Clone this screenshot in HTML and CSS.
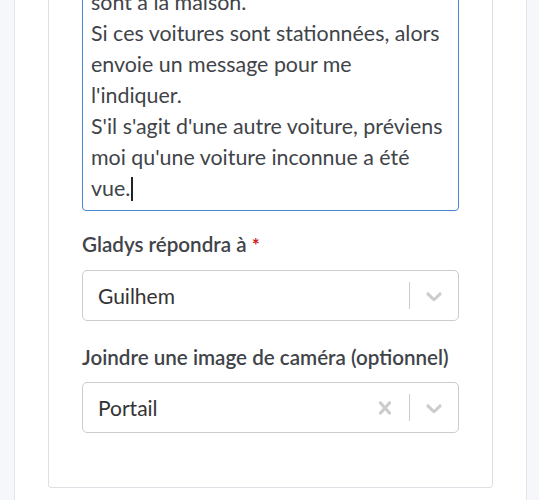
FILE: index.html
```html
<!DOCTYPE html>
<html lang="fr">
<head>
<meta charset="utf-8">
<title>Scène</title>
<link rel="stylesheet" href="styles.css">
</head>
<body>
<div class="card">
  <div class="panel">
    <div class="form-group form-group-message">
      <div class="textarea">sont à la maison.<br>Si ces voitures sont stationnées, alors<br>envoie un message pour me<br>l'indiquer.<br>S'il s'agit d'une autre voiture, préviens<br>moi qu'une voiture inconnue a été<br>vue.<span class="caret"></span></div>
    </div>
    <div class="form-group">
      <label class="form-label">Gladys répondra à <span class="required">*</span></label>
      <div class="select">
        <div class="select-value">Guilhem</div>
        <div class="select-indicators">
          <span class="separator"></span>
          <span class="indicator">
            <svg viewBox="0 0 20 20" class="icon"><path d="M4.516 7.548c0.436-0.446 1.043-0.481 1.576 0l3.908 3.747 3.908-3.747c0.533-0.481 1.141-0.446 1.574 0 0.436 0.445 0.408 1.197 0 1.615-0.406 0.418-4.695 4.502-4.695 4.502-0.217 0.223-0.502 0.335-0.787 0.335s-0.57-0.112-0.789-0.335c0 0-4.287-4.084-4.695-4.502s-0.436-1.17 0-1.615z"/></svg>
          </span>
        </div>
      </div>
    </div>
    <div class="form-group">
      <label class="form-label">Joindre une image de caméra (optionnel)</label>
      <div class="select">
        <div class="select-value">Portail</div>
        <div class="select-indicators">
          <span class="indicator">
            <svg viewBox="0 0 20 20" class="icon"><path d="M14.348 14.849c-0.469 0.469-1.229 0.469-1.697 0l-2.651-3.030-2.651 3.029c-0.469 0.469-1.229 0.469-1.697 0-0.469-0.469-0.469-1.229 0-1.697l2.758-3.15-2.759-3.152c-0.469-0.469-0.469-1.228 0-1.697s1.228-0.469 1.697 0l2.652 3.031 2.651-3.031c0.469-0.469 1.228-0.469 1.697 0s0.469 1.229 0 1.697l-2.758 3.152 2.758 3.150c0.469 0.469 0.469 1.229 0 1.698z"/></svg>
          </span>
          <span class="separator"></span>
          <span class="indicator">
            <svg viewBox="0 0 20 20" class="icon"><path d="M4.516 7.548c0.436-0.446 1.043-0.481 1.576 0l3.908 3.747 3.908-3.747c0.533-0.481 1.141-0.446 1.574 0 0.436 0.445 0.408 1.197 0 1.615-0.406 0.418-4.695 4.502-4.695 4.502-0.217 0.223-0.502 0.335-0.787 0.335s-0.57-0.112-0.789-0.335c0 0-4.287-4.084-4.695-4.502s-0.436-1.17 0-1.615z"/></svg>
          </span>
        </div>
      </div>
    </div>
  </div>
</div>
</body>
</html>
```
FILE: styles.css
```css
html, body {
  margin: 0;
  padding: 0;
}
body {
  background: #f5f7fb;
  font-family: "Lato", "Noto Sans", sans-serif;
  color: #495057;
  overflow: hidden;
  height: 500px;
}
.card {
  margin: -90px 12px 0 14px;
  background: #fff;
  border: 1px solid #e3e6ec;
  border-radius: 3px;
  padding: 34px 33px 40px;
}
.panel {
  border: 1px solid #dcdfe4;
  border-radius: 3px;
  padding: 34px 33px 33px;
}
.form-group {
  margin-bottom: 21px;
}
.form-group-message {
  margin-bottom: 18px;
}
.textarea {
  border: 1px solid #4a85d0;
  border-radius: 4px;
  padding: 6px 8px;
  font-size: 21.4px;
  line-height: 31px;
  color: #3f4449;
  background: #fff;
}
.caret {
  display: inline-block;
  width: 1.5px;
  height: 24px;
  background: #222;
  vertical-align: -5px;
  margin-left: 1px;
}
.form-label {
  display: block;
  font-size: 20.6px;
  font-weight: 600;
  line-height: 30px;
  margin-bottom: 10px;
  color: #3f4449;
}
.required {
  color: #cd201f;
  font-size: 19px;
  font-weight: 700;
}
.select {
  display: flex;
  align-items: stretch;
  border: 1px solid #cccccc;
  border-radius: 5px;
  height: 49px;
  background: #fff;
}
.select-value {
  flex: 1;
  display: flex;
  align-items: center;
  padding: 0 15px;
  font-size: 21px;
  color: #333333;
}
.select-indicators {
  display: flex;
  align-items: stretch;
}
.separator {
  width: 1px;
  margin: 11px 0;
  background: #cccccc;
}
.indicator {
  width: 48px;
  display: flex;
  align-items: center;
  justify-content: center;
}
.icon {
  width: 26px;
  height: 26px;
  fill: #cccccc;
}
```
